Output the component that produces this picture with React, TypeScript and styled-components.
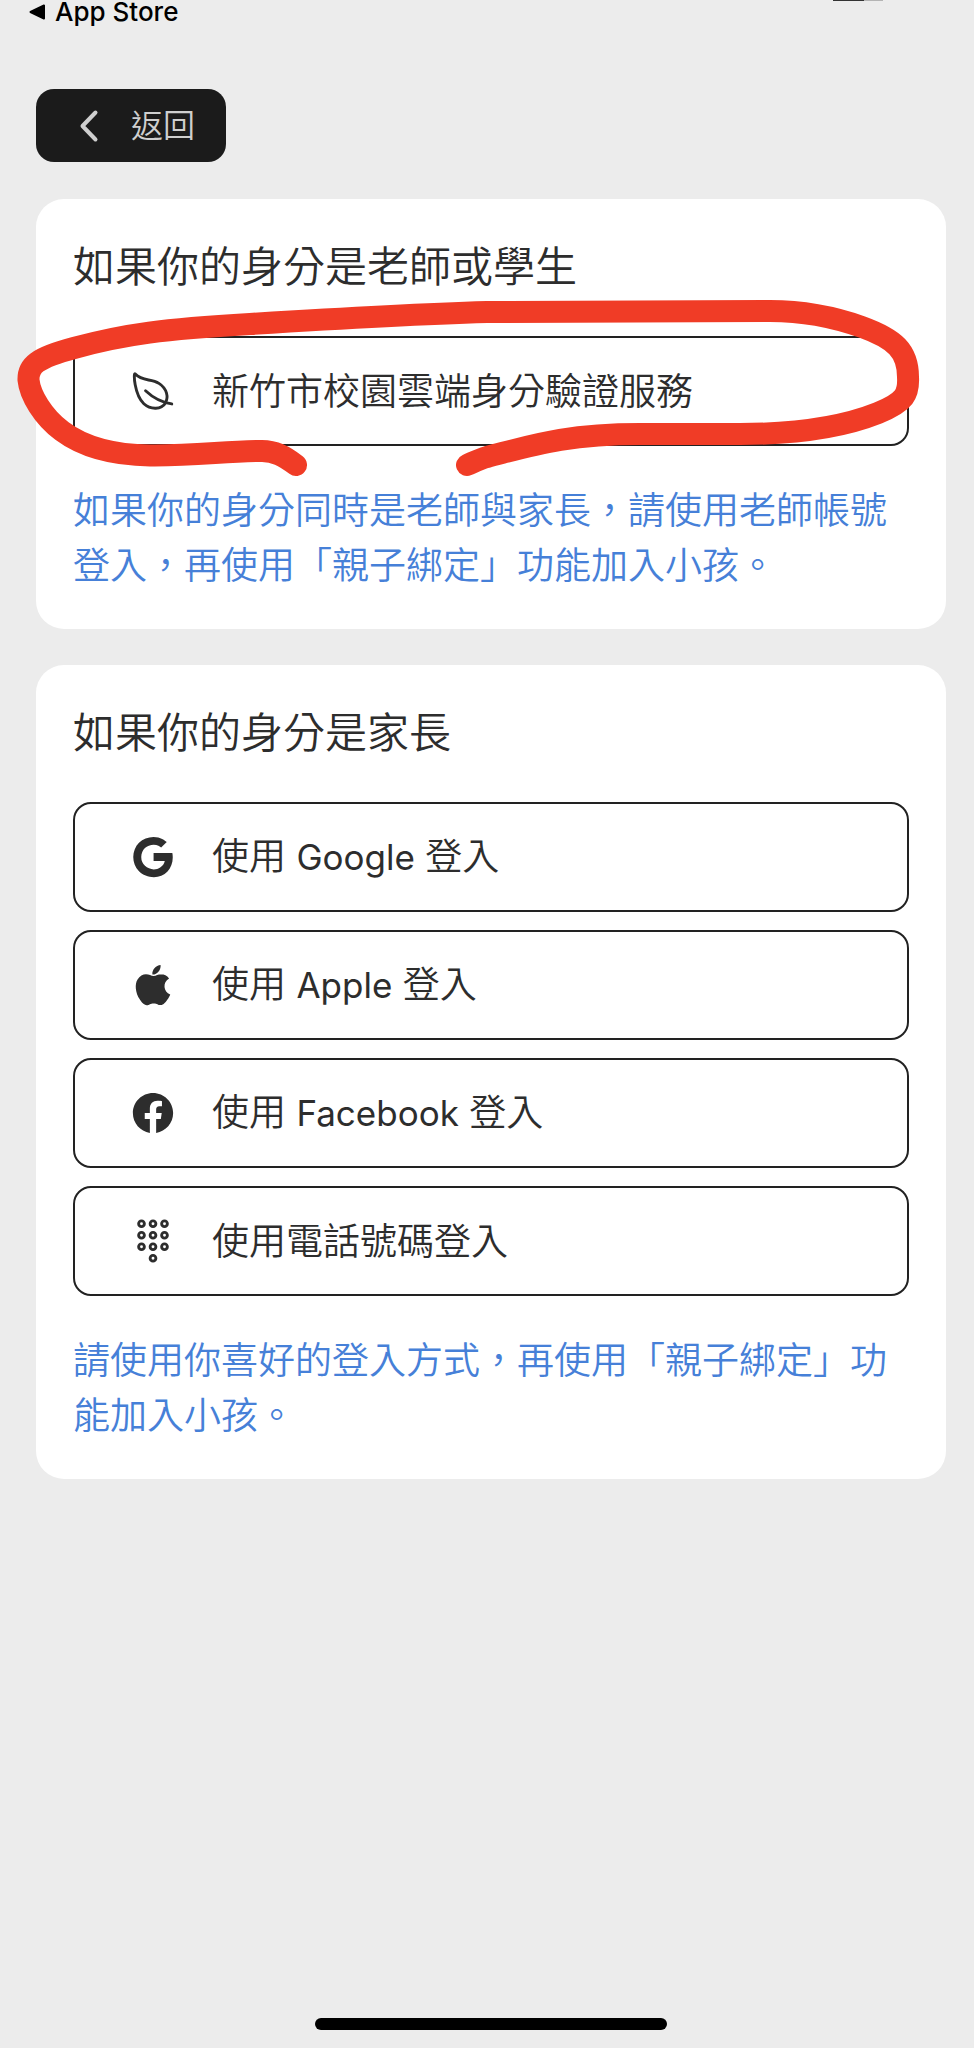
import React from 'react';
import styled, { createGlobalStyle } from 'styled-components';
import {
  IoKeypadOutline,
  IoLeafOutline,
  IoLogoApple,
  IoLogoFacebook,
  IoLogoGoogle,
} from 'react-icons/io5';

const GlobalStyle = createGlobalStyle`
  *, *::before, *::after {
    box-sizing: border-box;
  }
  body {
    margin: 0;
    background: #ececec;
    color: #2d2d2d;
    font-family: Inter, 'Noto Sans CJK TC DemiLight', 'Noto Sans CJK TC', sans-serif;
  }
`;

const Page = styled.div`
  display: flex;
  flex-direction: column;
  min-height: 100vh;
  padding: 0 28px 18px 36px;
`;

const StatusBar = styled.header`
  display: flex;
  justify-content: space-between;
  align-items: flex-start;
  height: 89px;
  margin-left: -8px;
`;

const AppStoreLink = styled.a`
  display: flex;
  align-items: center;
  gap: 9px;
  height: 24px;
  color: #000;
  font-size: 26px;
  font-weight: 500;
  line-height: 24px;
  text-decoration: none;
`;

const BatteryEdge = styled.span`
  width: 50px;
  height: 1px;
  margin-right: 63px;
  background: linear-gradient(to right, #333 62%, #b4b4b4 62%);
`;

const BackButton = styled.button`
  display: flex;
  align-items: center;
  align-self: flex-start;
  gap: 32px;
  height: 73px;
  padding: 0 31px 0 42px;
  border: 0;
  border-radius: 18px;
  background: #1b1b1b;
  color: #cfcfcf;
  font-family: inherit;
  font-size: 32px;
  line-height: 40px;
`;

const Main = styled.main`
  display: flex;
  flex-direction: column;
  gap: 36px;
  margin: 37px 0 36px;
`;

const Card = styled.section`
  padding: 36px 37px;
  border-radius: 28px;
  background: #fff;
`;

const CardTitle = styled.h2`
  margin: 0 0 38px;
  font-size: 42px;
  font-weight: 400;
  line-height: 63px;
`;

const Options = styled.div`
  position: relative;
  display: flex;
  flex-direction: column;
  gap: 18px;
`;

const OptionButton = styled.button`
  display: flex;
  align-items: center;
  gap: 36px;
  height: 110px;
  padding: 0 55px;
  border: 2px solid #222;
  border-radius: 18px;
  background: #fff;
  color: #2d2d2d;
  font-family: inherit;
  font-size: 37px;
  font-weight: 400;
  line-height: 55px;
  text-align: left;

  svg {
    flex: none;
  }
`;

const Brand = styled.span`
  font-size: 35px;
`;

const Note = styled.p`
  margin: 37px 0 0;
  color: #4680d8;
  font-size: 37px;
  font-weight: 400;
  line-height: 55px;
`;

const MarkerStroke = styled.svg`
  position: absolute;
  top: -40px;
  left: -60px;
  width: calc(100% + 84px);
  height: 190px;
  pointer-events: none;
`;

const HomeIndicator = styled.div`
  align-self: center;
  width: 352px;
  height: 12px;
  margin-top: auto;
  border-radius: 6px;
  background: #000;
`;

const brandOptions = [
  { brand: 'Google', Icon: IoLogoGoogle },
  { brand: 'Apple', Icon: IoLogoApple },
  { brand: 'Facebook', Icon: IoLogoFacebook },
];

export default function App() {
  return (
    <>
      <GlobalStyle />
      <Page lang="zh-Hant">
        <StatusBar>
          <AppStoreLink href="#">
            <svg width="18" height="18" viewBox="0 0 18 18" aria-hidden="true">
              <path
                d="M2.5 9 L16 2.5 V15.5 Z"
                fill="#000"
                stroke="#000"
                strokeWidth="2"
                strokeLinejoin="round"
              />
            </svg>
            App Store
          </AppStoreLink>
          <BatteryEdge />
        </StatusBar>

        <BackButton type="button">
          <svg width="21" height="34" viewBox="0 0 21 34" aria-hidden="true">
            <path
              d="M17.500 3.500 L4.500 17 L17.500 30.500"
              fill="none"
              stroke="currentColor"
              strokeWidth="4"
              strokeLinecap="round"
              strokeLinejoin="round"
            />
          </svg>
          <span>返回</span>
        </BackButton>

        <Main>
          <Card>
            <CardTitle>如果你的身分是老師或學生</CardTitle>
            <Options>
              <OptionButton type="button">
                <IoLeafOutline size={46} aria-hidden="true" />
                <span>新竹市校園雲端身分驗證服務</span>
              </OptionButton>
              <MarkerStroke
                viewBox="13 296 920 190"
                preserveAspectRatio="none"
                aria-hidden="true"
              >
                <path
                  d="M296 465 C284 456 275 451 262 451 C226 451 196 456 150 455.500 C112 455 82 446 62 431 C43 417 30 395 28.500 380 C28 366 36 358 74 348 C125 334 165 329 250 324 C330 319 420 314 487 312 L770 311 C805 311 834 317 862 327 C895 339 908 351 908 377 C909 394 905 402 878 413 C838 429 790 434 740 434 L640 434 C565 434 530 446 487 457 C480 459 474 462 467 465"
                  fill="none"
                  stroke="#f03c26"
                  strokeWidth="22"
                  strokeLinecap="round"
                  strokeLinejoin="round"
                />
              </MarkerStroke>
            </Options>
            <Note>
              如果你的身分同時是老師與家長，請使用老師帳號登入，再使用「親子綁定」功能加入小孩。
            </Note>
          </Card>

          <Card>
            <CardTitle>如果你的身分是家長</CardTitle>
            <Options>
              {brandOptions.map(({ brand, Icon }) => (
                <OptionButton type="button" key={brand}>
                  <Icon size={46} aria-hidden="true" />
                  <span>
                    使用 <Brand>{brand}</Brand> 登入
                  </span>
                </OptionButton>
              ))}
              <OptionButton type="button">
                <IoKeypadOutline size={46} aria-hidden="true" />
                <span>使用電話號碼登入</span>
              </OptionButton>
            </Options>
            <Note>
              請使用你喜好的登入方式，再使用「親子綁定」功能加入小孩。
            </Note>
          </Card>
        </Main>

        <HomeIndicator />
      </Page>
    </>
  );
}
